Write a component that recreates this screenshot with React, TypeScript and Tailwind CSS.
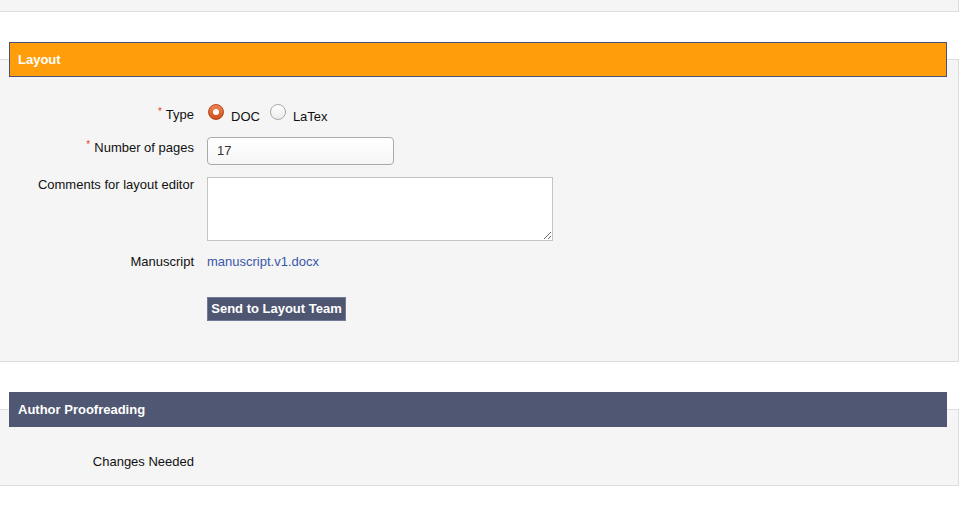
import React from "react";

function Radio({ checked }: { checked?: boolean }) {
  return checked ? (
    <span className="flex h-[16px] w-[16px] shrink-0 items-center justify-center rounded-full border border-[#b5471d] bg-gradient-to-b from-[#ef8552] to-[#cc4f1e]">
      <span className="block h-[6px] w-[6px] rounded-full bg-white" />
    </span>
  ) : (
    <span className="block h-[16px] w-[16px] shrink-0 rounded-full border border-[#a9a9a9] bg-gradient-to-b from-white to-[#ececec]" />
  );
}

function Req() {
  return <span className="relative -top-[4px] mr-[4px] text-[10px] leading-none text-[#e0472f]">*</span>;
}

export default function App() {
  return (
    <div className="min-h-[513px] bg-white font-['Liberation_Sans',Arial,sans-serif] text-[13px] leading-[16px] text-[#111]">
      <div className="h-[12px] w-[959px] border-b border-r border-[#dddddd] bg-[#f5f5f5]" />

      {/* Layout section */}
      <section className="mt-[30px]">
        <div className="relative z-10 ml-[9px] flex h-[35px] w-[938px] items-center border border-[#4a5273] bg-[#ff9d0a] pl-[8px] font-bold text-white">
          Layout
        </div>
        <div className="-mt-[18px] h-[303px] w-[959px] border-b border-r border-t border-[#dddddd] bg-[#f5f5f5] pt-[44px]">
          {/* Type */}
          <div className="flex h-[21px]">
            <div className="w-[194px] pt-[3px] text-right">
              <Req />Type
            </div>
            <div className="ml-[13px] flex items-start">
              <span className="ml-[1px] flex"><Radio checked /></span>
              <span className="ml-[7px] mt-[5px]">DOC</span>
              <span className="ml-[10px] flex"><Radio /></span>
              <span className="ml-[7px] mt-[5px]">LaTex</span>
            </div>
          </div>

          {/* Number of pages */}
          <div className="mt-[12px] flex">
            <div className="w-[194px] pt-[3px] text-right">
              <Req />Number of pages
            </div>
            <div className="ml-[13px]">
              <div className="flex h-[28px] w-[187px] items-center rounded-[4px] border border-[#aaaaaa] bg-gradient-to-b from-white to-[#f6f6f6] pl-[9px] text-[#333]">
                17
              </div>
            </div>
          </div>

          {/* Comments */}
          <div className="mt-[12px] flex">
            <div className="w-[194px] text-right">Comments for layout editor</div>
            <div className="ml-[13px]">
              <textarea className="block h-[64px] w-[346px] border border-[#c4c4c4] bg-white p-[4px] outline-none" />
            </div>
          </div>

          {/* Manuscript */}
          <div className="mt-[13px] flex">
            <div className="w-[194px] text-right">Manuscript</div>
            <div className="ml-[13px]">
              <a className="text-[#3a57a7]" href="#">manuscript.v1.docx</a>
            </div>
          </div>

          {/* Button */}
          <div className="mt-[27px] flex">
            <div className="w-[194px]" />
            <div className="ml-[13px]">
              <button className="flex h-[24px] w-[139px] items-center justify-center border border-[#737a95] bg-[#4f5672] font-bold text-white">
                Send to Layout Team
              </button>
            </div>
          </div>
        </div>
      </section>

      {/* Author Proofreading */}
      <section className="mt-[30px]">
        <div className="relative z-10 ml-[9px] flex h-[35px] w-[938px] items-center bg-[#4f5772] pl-[9px] font-bold text-white">
          Author Proofreading
        </div>
        <div className="-mt-[18px] h-[77px] w-[959px] border-b border-r border-t border-[#dddddd] bg-[#f5f5f5] pt-[44px]">
          <div className="flex">
            <div className="w-[194px] text-right">Changes Needed</div>
          </div>
        </div>
      </section>
    </div>
  );
}
